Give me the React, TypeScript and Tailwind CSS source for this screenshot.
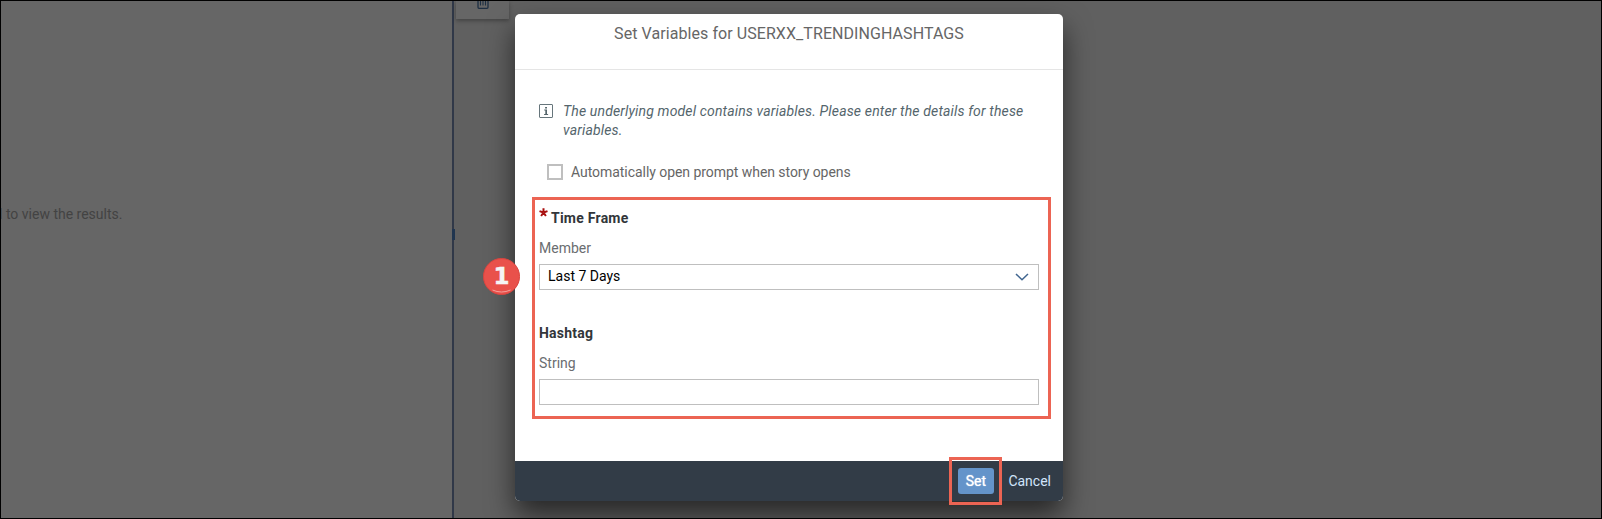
import type { ReactNode } from "react";

function TrashIcon() {
  return (
    <svg width="12" height="15" viewBox="0 0 12 15" fill="none" stroke="#1d2f43">
      <path d="M0 3.5H12M1 3.5V13.3a1 1 0 0 0 1 1H10a1 1 0 0 0 1-1V3.5" strokeWidth="1.3" />
      <path d="M3.5 5V11.5M6 5V11.5M8.5 5V11.5" strokeWidth="1.1" />
    </svg>
  );
}

function InfoIcon() {
  return (
    <svg width="14" height="14" viewBox="0 0 14 14" fill="none" className="shrink-0">
      <rect x="0.5" y="0.5" width="13" height="13" rx="0.5" stroke="#66757b" />
      <path d="M6.1 3h1.9v1.6H6.1zM5.2 5.6H8v4.4h1.1v1H5.1v-1h1.2V6.6H5.2z" fill="#56666c" />
    </svg>
  );
}

function StepMarker() {
  return (
    <div className="absolute -left-[32px] top-[244px] z-10 flex h-[37px] w-[37px] items-center justify-center rounded-full border border-[#d9453f] bg-[#e9514b]">
      <span className="font-['DejaVu_Sans',sans-serif] text-[23px] leading-none font-bold text-[#f5f5f5] [-webkit-text-stroke:0.4px_#f5f5f5]">1</span>
      <svg className="absolute inset-0" width="35" height="35" viewBox="0 0 35 35" fill="none">
        <path d="M8.5 31Q17.5 35 26.5 31" stroke="#f4a09b" strokeWidth="1" />
      </svg>
    </div>
  );
}

function Field({ title, label, required, children }: { title: string; label: string; required?: boolean; children?: ReactNode }) {
  return (
    <div>
      <div className="flex h-5 items-center text-[14px] font-bold tracking-[0.24px] text-[#32363a]">
        {required && (
          <svg width="9" height="9" viewBox="0 0 9 9" className="mr-[3px] mb-[11px]" stroke="#a80f0f" strokeWidth="2">
            <path d="M4.5 4.5V0.3M4.5 4.5L0.5 3.1M4.5 4.5L8.5 3.1M4.5 4.5L2.1 8M4.5 4.5L6.9 8" />
          </svg>
        )}
        <span>{title}</span>
      </div>
      <div className="mt-[10px] h-5 text-[14px] leading-5 text-[#6a6d70]">{label}</div>
      <div className="mt-[6px] flex h-[26px] w-[500px] items-center justify-between border border-[#bfbfbf] bg-white pr-[9px] pl-[8px] text-[14px] text-black">
        {children}
      </div>
    </div>
  );
}

export default function App() {
  return (
    <div className="relative flex h-[519px] w-[1602px] overflow-hidden border border-black bg-[#606060] font-[Roboto,sans-serif]">
      <div className="w-[451px] bg-[#666666] pt-[203px] text-[14px] leading-5 whitespace-nowrap text-[#434343]">
        <span className="-ml-[2px]">l to view the results.</span>
      </div>
      <div className="w-[2px] bg-[#303848] pt-[228px]">
        <div className="relative h-[11px] w-[3px] bg-[#20354f]" />
      </div>
      <div className="ml-[2px] flex h-[18px] w-[53px] items-end justify-center bg-[#666666] pb-[10px] shadow-[0_2px_4px_rgba(0,0,0,0.3)]">
        <TrashIcon />
      </div>

      <div className="absolute top-[13px] left-[514px] flex h-[487px] w-[548px] flex-col rounded-[5px] bg-white shadow-[0_14px_28px_rgba(0,0,0,0.6)]">
        <StepMarker />
        <header className="h-[56px] border-b border-[#e5e5e5] pt-[9px] text-center text-[16px] leading-[22px] text-[#666666]">
          <span className="tracking-[0.07px]">Set Variables for USERXX_TRENDINGHASHTAGS</span>
        </header>

        <div className="mt-[32px] flex h-[38px] gap-[10px] pl-[24px]">
          <div className="pt-[2px]"><InfoIcon /></div>
          <p className="w-[475px] text-[14px] leading-[19px] tracking-[0.155px] text-[#54656c] italic">
            The underlying model contains variables. Please enter the details for these<br />variables.
          </p>
        </div>

        <label className="mt-[22px] flex h-5 items-center gap-[8px] pl-[32px] text-[14px] text-[#666666]">
          <span className="h-[16px] w-[16px] border-2 border-[#bfbfbf]" />
          <span className="tracking-[-0.05px]">Automatically open prompt when story opens</span>
        </label>

        <section className="mt-[15px] ml-[17px] flex h-[222px] w-[519px] flex-col gap-[33px] border-[3px] border-[#ec6453] pt-[8px] pl-[4px]">
          <Field title="Time Frame" label="Member" required>
            <span className="pb-[2px]">Last 7 Days</span>
            <svg width="14" height="8" viewBox="0 0 14 8" fill="none" stroke="#416690" strokeWidth="1.5">
              <path d="M1 1L7 6.8L13 1" />
            </svg>
          </Field>
          <Field title="Hashtag" label="String" />
        </section>

        <footer className="mt-auto flex h-[40px] items-center justify-end rounded-b-[5px] bg-[#323c47] pr-[12px] text-[14px]">
          <div className="flex h-[48px] w-[53px] items-center justify-center border-[3px] border-[#ec6453]">
            <button className="h-[26px] w-[36px] rounded-[3px] bg-[#6494ca] text-white [text-shadow:0_0_1px_#fff]">Set</button>
          </div>
          <button className="ml-[6px] text-[#d1e4fb]">Cancel</button>
        </footer>
      </div>
    </div>
  );
}
